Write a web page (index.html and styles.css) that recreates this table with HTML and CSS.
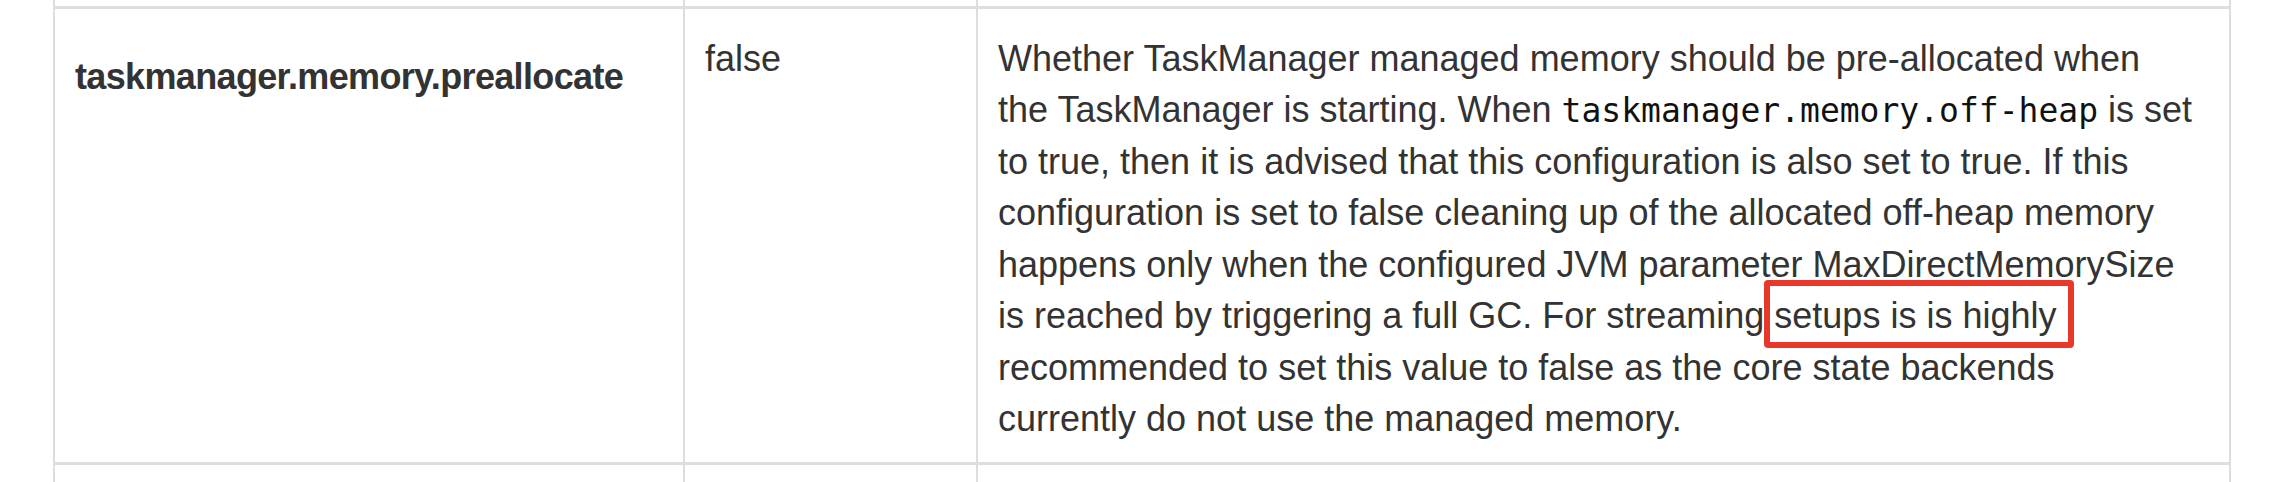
FILE: index.html
```html
<!DOCTYPE html>
<html lang="en">
<head>
<meta charset="utf-8">
<title>taskmanager.memory.preallocate</title>
<link rel="stylesheet" href="styles.css">
</head>
<body>
<div class="table">
  <div class="row row-prev">
    <div class="cell"></div>
    <div class="cell"></div>
    <div class="cell cell-last"></div>
  </div>
  <div class="row row-main">
    <div class="cell cell-key"><strong class="key">taskmanager.memory.preallocate</strong></div>
    <div class="cell">false</div>
    <div class="cell cell-last">
      <p class="desc">Whether TaskManager managed memory should be pre-allocated when<br>
the TaskManager is starting. When <code class="code">taskmanager.memory.off-heap</code> is set<br>
to true, then it is advised that this configuration is also set to true. If this<br>
configuration is set to false cleaning up of the allocated off-heap memory<br>
happens only when the configured JVM parameter MaxDirectMemorySize<br>
is reached by triggering a full GC. For streaming <span class="mark">setups is is highly</span><br>
recommended to set this value to false as the core state backends<br>
currently do not use the managed memory.</p>
    </div>
  </div>
  <div class="row row-next">
    <div class="cell"></div>
    <div class="cell"></div>
    <div class="cell cell-last"></div>
  </div>
</div>
</body>
</html>
```

FILE: styles.css
```css
html, body {
  margin: 0;
  padding: 0;
  background: #ffffff;
}

body {
  font-family: "Liberation Sans", Arial, Helvetica, sans-serif;
  font-size: 36px;
  line-height: 1.4286;
  color: #333333;
  overflow: hidden;
}

.table {
  margin-left: 53px;
  width: 2178px;
}

.row {
  display: grid;
  grid-template-columns: 630px 293px 1fr;
}

.row-main,
.row-next {
  border-top: 3px solid #dedede;
}

.row-prev {
  height: 6px;
}

.row-next {
  height: 40px;
}

.cell {
  border-left: 2px solid #dddddd;
  padding: 0 20px;
}

.cell-last {
  border-right: 2px solid #dddddd;
}

.row-main .cell {
  padding-top: 24px;
  padding-bottom: 18px;
}

.row-main .cell-key {
  padding-top: 42px;
}

.key {
  font-weight: bold;
  letter-spacing: -0.65px;
}

.desc {
  margin: 0;
  white-space: nowrap;
}

.code {
  font-family: "DejaVu Sans Mono", "Liberation Mono", monospace;
  font-size: 33px;
  color: #111111;
}

.mark {
  position: relative;
}

.mark::after {
  content: "";
  position: absolute;
  left: -10px;
  right: -18px;
  top: -15px;
  bottom: -12px;
  border: 6px solid #e8382c;
  border-radius: 4px;
}
```
